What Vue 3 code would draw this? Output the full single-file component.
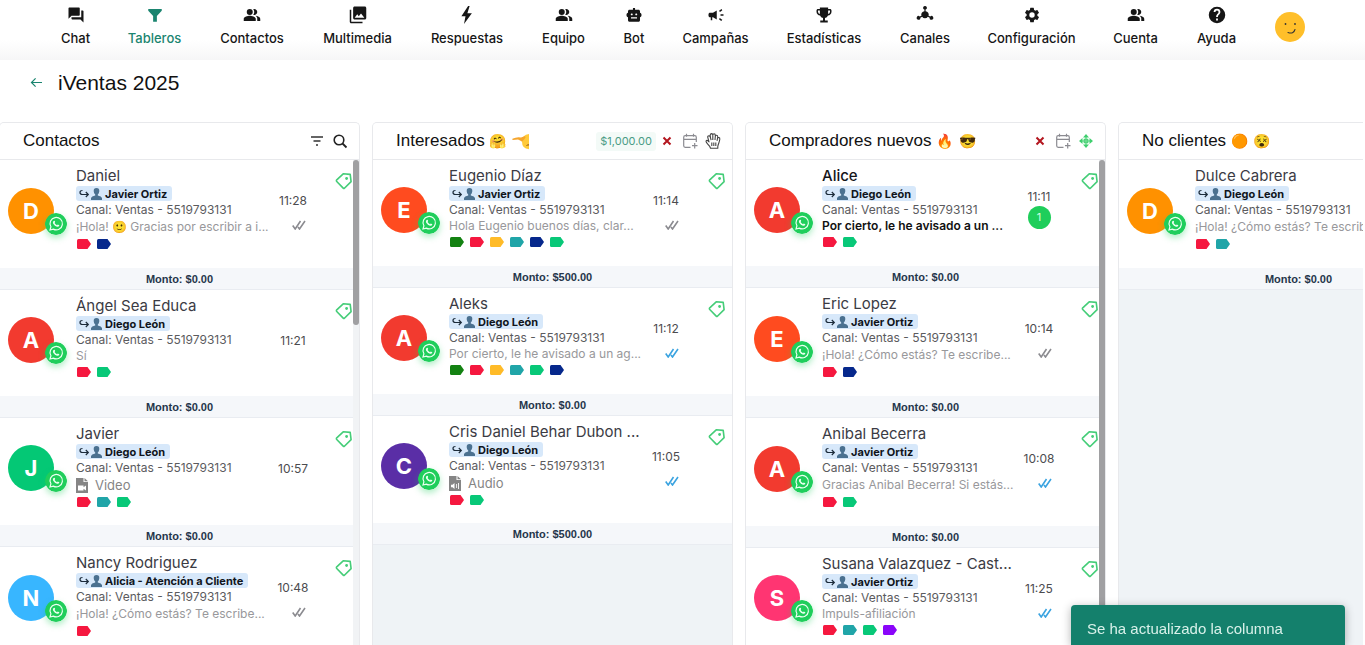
<script setup>
const nav = [
  { label: 'Chat', icon: 'chat' },
  { label: 'Tableros', icon: 'funnel', active: true },
  { label: 'Contactos', icon: 'people' },
  { label: 'Multimedia', icon: 'media' },
  { label: 'Respuestas', icon: 'bolt' },
  { label: 'Equipo', icon: 'people' },
  { label: 'Bot', icon: 'bot' },
  { label: 'Campañas', icon: 'horn' },
  { label: 'Estadísticas', icon: 'trophy' },
  { label: 'Canales', icon: 'hub' },
  { label: 'Configuración', icon: 'gear' },
  { label: 'Cuenta', icon: 'people' },
  { label: 'Ayuda', icon: 'help' },
]

const icons = {
  chat: 'M21 6h-2v9H6v2c0 .55.45 1 1 1h11l4 4V7c0-.55-.45-1-1-1zm-4 6V3c0-.55-.45-1-1-1H3c-.55 0-1 .45-1 1v14l4-4h10c.55 0 1-.45 1-1z',
  funnel: 'M3 4h18v2.200l-6.500 7v7.800h-5v-7.800L3 6.200z',
  people: 'M16.670 13.130C18.040 14.060 19 15.320 19 17v3h4v-3c0-2.180-3.570-3.470-6.330-3.870zM9 4a4 4 0 1 0 0 8 4 4 0 0 0 0-8zM15 12c2.210 0 4-1.790 4-4s-1.790-4-4-4c-.47 0-.91.1-1.330.24C14.500 5.270 15 6.580 15 8s-.5 2.730-1.330 3.760c.42.14.86.24 1.330.24zM9 13c-2.670 0-8 1.340-8 4v3h16v-3c0-2.660-5.330-4-8-4z',
  media: 'M23 16V2.500c0-1.100-.9-2-2-2H7.500c-1.100 0-2 .9-2 2V16c0 1.100.9 2 2 2H21c1.100 0 2-.9 2-2zM11 11l2.030 2.710L16 10l4.500 5.500h-13l3.500-4.500zM1 5v16c0 1.100.9 2 2 2h15v-2H3V5H1z',
  bolt: 'M13.500 0 4.500 13.500h5.500L8 24l10.500-14.200h-6L15.500 0z',
  bot: 'M20 9V7c0-1.100-.9-2-2-2h-4.600V2.500h-2.800V5H6c-1.100 0-2 .9-2 2v2c-1.200 0-2 1.340-2 3s.8 3 2 3v4c0 1.100.9 2 2 2h12c1.100 0 2-.9 2-2v-4c1.200 0 2-1.340 2-3s-.8-3-2-3zM7.700 11.200c0-.7.6-1.200 1.300-1.200s1.300.5 1.300 1.200-.6 1.200-1.300 1.200-1.300-.5-1.300-1.200zM16 16.500H8V15h8v1.500zm-1-4.100c-.7 0-1.300-.5-1.300-1.200S14.300 10 15 10s1.300.5 1.300 1.200-.6 1.200-1.300 1.200z',
  horn: 'M18 11v2h4v-2h-4zM16 17.610c.96.71 2.210 1.650 3.200 2.390.4-.53.8-1.070 1.200-1.600-.99-.74-2.240-1.680-3.200-2.400-.4.540-.8 1.080-1.200 1.610zM20.400 5.600c-.4-.53-.8-1.070-1.200-1.600-.99.740-2.240 1.680-3.200 2.400.4.530.8 1.070 1.200 1.600.96-.72 2.210-1.650 3.200-2.400zM4 9c-1.100 0-2 .9-2 2v2c0 1.100.9 2 2 2h1v4h2v-4h1l5 3V6L8 9H4z',
  trophy: 'M20 4h-2.500V2h-11v2H4c-1.100 0-2 .9-2 2v1.500c0 2.600 2 4.800 4.700 5.100A5.500 5.500 0 0 0 10.700 16v3.300H7V22h10v-2.700h-3.700V16a5.500 5.500 0 0 0 4-3.400C20 12.300 22 10.100 22 7.500V6c0-1.100-.9-2-2-2zM4 7.500V6h2.500v4.500A3.200 3.200 0 0 1 4 7.500zm16 0a3.200 3.200 0 0 1-2.500 3V6H20z',
  hub: 'M12 0a2.400 2.400 0 0 1 .8 4.700v2.200a4.600 4.600 0 0 1 3.900 6.100l2.300 1a2.400 2.400 0 1 1-.8 1.500l-2.400-1.100a4.600 4.600 0 0 1-7.600 0l-2.400 1.100A2.400 2.400 0 1 1 5 14l2.300-1a4.600 4.600 0 0 1 3.900-6.100V4.700A2.400 2.400 0 0 1 12 0z',
  gear: 'M19.140 12.940c.04-.3.060-.61.060-.94s-.020-.64-.070-.94l2.030-1.580a.49.49 0 0 0 .12-.61l-1.920-3.320a.49.49 0 0 0-.59-.22l-2.390.96a7 7 0 0 0-1.620-.94l-.36-2.540a.48.48 0 0 0-.48-.41h-3.840a.48.48 0 0 0-.47.41l-.36 2.540a7.400 7.400 0 0 0-1.620.94l-2.390-.96a.48.48 0 0 0-.59.22L2.740 8.870a.48.48 0 0 0 .12.61l2.030 1.580a6 6 0 0 0 0 1.880l-2.030 1.580a.49.49 0 0 0-.12.610l1.920 3.320c.12.220.37.290.59.220l2.390-.96c.5.380 1.030.7 1.620.94l.36 2.540c.05.240.24.410.48.410h3.840c.24 0 .44-.17.470-.41l.36-2.540a7.400 7.400 0 0 0 1.620-.94l2.390.96c.22.080.47 0 .59-.22l1.920-3.320a.48.48 0 0 0-.12-.61l-2.010-1.580zM12 15.600a3.600 3.600 0 1 1 0-7.200 3.600 3.600 0 0 1 0 7.200z',
  help: 'M12 1a11 11 0 1 0 0 22 11 11 0 0 0 0-22zm1.200 18.200h-2.400v-2.400h2.400v2.400zm2.300-8.700-1 1c-.9.900-1.300 1.600-1.300 3.300h-2.400v-.6c0-1.300.5-2.400 1.300-3.300l1.400-1.400c.4-.4.600-.9.600-1.500a2.100 2.100 0 0 0-4.200 0H7.500a4.500 4.500 0 0 1 9 0c0 1-.4 1.800-1 2.500z',
}

const R = '#f5183f'
const G = '#08c878'
const T = '#20a5a8'
const B = '#06288c'
const Y = '#ffbb28'
const D = '#138212'
const P = '#8a05fa'

const columns = [
  {
    title: 'Contactos', emoji: [], tools: 'search', scroll: 'short',
    cards: [
      { name: 'Daniel', color: '#ff9100', agent: 'Javier Ortiz', text: '¡Hola! 🙂 Gracias por escribir a i...', tall: true, time: '11:28', check: 'grey', tags: [R, B], amount: '$0.00' },
      { name: 'Ángel Sea Educa', color: '#f23a2f', agent: 'Diego León', text: 'Sí', time: '11:21', tags: [R, G], amount: '$0.00' },
      { name: 'Javier', color: '#04c875', agent: 'Diego León', file: 'Video', time: '10:57', tags: [R, T, G], amount: '$0.00' },
      { name: 'Nancy Rodriguez', color: '#38b6ff', agent: 'Alicia - Atención a Cliente', text: '¡Hola! ¿Cómo estás? Te escribe...', tall: true, time: '10:48', check: 'grey', tags: [R], amount: '' },
    ],
  },
  {
    title: 'Interesados', emoji: ['🤗', 'salute'], total: '$1,000.00', tools: 'grab',
    cards: [
      { name: 'Eugenio Díaz', color: '#ff4b1f', agent: 'Javier Ortiz', text: 'Hola Eugenio buenos días, clar...', time: '11:14', check: 'grey', tags: [D, R, Y, T, B, G], amount: '$500.00' },
      { name: 'Aleks', color: '#f23a2f', agent: 'Diego León', text: 'Por cierto, le he avisado a un ag...', time: '11:12', check: 'blue', tags: [D, R, Y, T, G, B], amount: '$0.00' },
      { name: 'Cris Daniel Behar Dubon ...', color: '#5a2ea6', agent: 'Diego León', file: 'Audio', time: '11:05', check: 'blue', tags: [R, G], amount: '$500.00' },
    ],
  },
  {
    title: 'Compradores nuevos', emoji: ['🔥', '😎'], tools: 'move', scroll: 'full',
    cards: [
      { name: 'Alice', unread: 1, color: '#f23a2f', agent: 'Diego León', text: 'Por cierto, le he avisado a un ...', time: '11:11', tags: [R, G], amount: '$0.00' },
      { name: 'Eric Lopez', color: '#ff4b1f', agent: 'Javier Ortiz', text: '¡Hola! ¿Cómo estás? Te escribe...', tall: true, time: '10:14', check: 'grey', tags: [R, B], amount: '$0.00' },
      { name: 'Anibal Becerra', color: '#f23a2f', agent: 'Javier Ortiz', text: 'Gracias Anibal Becerra! Si estás...', tall: true, time: '10:08', check: 'blue', tags: [R, G], amount: '$0.00' },
      { name: 'Susana Valazquez - Cast...', color: '#ff3572', agent: 'Javier Ortiz', text: 'Impuls-afiliación', time: '11:25', check: 'blue', tags: [R, T, G, P], amount: '' },
    ],
  },
  {
    title: 'No clientes', emoji: ['🟠', '😵'],
    cards: [
      { name: 'Dulce Cabrera', color: '#ff9100', agent: 'Diego León', text: '¡Hola! ¿Cómo estás? Te escribe...', tall: true, tags: [R, T], amount: '$0.00' },
    ],
  },
]
</script>

<template>
  <div class="page">
    <header class="topbar">
      <nav class="nav">
        <a v-for="n in nav" :key="n.label" href="#" class="nav-item" :class="{ active: n.active }">
          <svg class="nav-icon" viewBox="0 0 24 24"><path :d="icons[n.icon]" /></svg>
          <span>{{ n.label }}</span>
        </a>
        <button class="me" aria-label="Perfil">
          <svg viewBox="0 0 30 30">
            <circle cx="15" cy="15" r="15" fill="#ffbf2a" />
            <circle cx="10.500" cy="12" r=".9" fill="#333" />
            <circle cx="20" cy="12" r=".9" fill="#333" />
            <path d="M13 20.500q5.500 2 7-3" fill="none" stroke="#333" stroke-width="1.100" stroke-linecap="round" />
          </svg>
        </button>
      </nav>
    </header>

    <main class="main">
      <div class="heading">
        <button class="back" aria-label="Volver">
          <svg viewBox="0 0 14 12"><path d="M13 6H1.500M6 1.500 1.500 6 6 10.500" /></svg>
        </button>
        <h1>iVentas 2025</h1>
      </div>

      <div class="board">
        <section v-for="c in columns" :key="c.title" class="column">
          <header class="col-head">
            <h2>
              {{ c.title }}
              <template v-for="e in c.emoji" :key="e">
                <svg v-if="e === 'salute'" class="emoji-svg" viewBox="0 0 17 17">
                  <path d="M17 1v15.200q-7-.3-7-7.400Q10 1.500 17 1z" fill="#ffca3a" />
                  <path d="M.4 5.800q4.600-2.300 8.600-1.300l3.500-1.200q2 .4.200 2.500l-2.300 2.400q-1 .6-2.300-.6L6 6.500.8 7q-.8-.5-.4-1.200z" fill="#f5a52c" />
                  <path d="M14.500 12.500q1.300-.8 2.500-.6" fill="none" stroke="#8a5213" />
                </svg>
                <span v-else class="emoji">{{ e }}</span>
              </template>
            </h2>
            <div v-if="c.tools === 'search'" class="tools">
              <button aria-label="Filtrar"><svg class="ic" viewBox="0 0 16 16"><path d="M2 4h12M4.500 8h7M7 12h2" stroke="#333" stroke-width="1.600" /></svg></button>
              <button aria-label="Buscar"><svg class="ic" viewBox="0 0 16 16"><circle cx="7" cy="7" r="4.800" stroke="#222" stroke-width="1.600" /><path d="m10.500 10.500 4 4" stroke="#222" stroke-width="1.800" /></svg></button>
            </div>
            <div v-else-if="c.tools" class="tools">
              <span v-if="c.total" class="total">{{ c.total }}</span>
              <button aria-label="Eliminar"><svg class="ic" viewBox="0 0 16 16"><path d="m4.500 4.500 7 7M11.500 4.500l-7 7" stroke="#b3161f" stroke-width="2" /></svg></button>
              <button aria-label="Programar"><svg class="ic" viewBox="0 0 16 16"><path d="M8.500 14.300H3.200q-1.500 0-1.500-1.500V4.200q0-1.500 1.500-1.500h9.600q1.500 0 1.500 1.500V9M1.700 6.300h12.600M4.500.8v3M11.500.8v3M12.700 10v5.500M10 12.700h5.500" stroke="#8b8b91" stroke-width="1.200" /></svg></button>
              <button aria-label="Mover">
                <svg v-if="c.tools === 'grab'" class="ic hand" viewBox="0 0 16 18"><path d="M4.800 14.500C3.500 12.500 1 10.800 1 9.300q.2-1.300 1.600-.7L4 9.800 2.700 5.200q-.1-1.500 1.200-1.500 1 .1 1.400 1.300L5.200 3q.2-1.400 1.400-1.400 1.100.1 1.200 1.400.2-1.300 1.300-1.300 1.200.1 1.200 1.500v1q.4-1.100 1.400-.9 1.200.2 1 1.600l-.1 1.300q.5-.9 1.400-.6 1 .4.800 1.700c-.3 3-1.600 4.500-2 7.200v1.700H5.500zM5.300 5l.8 3.200M7.800 3.200V8M10.300 4.200 10 8M12.600 6.200 12 8.800M6.800 10.500v3.500M8.800 10.500v3.500M10.800 10.500v3.500" fill="#fff" stroke="#444" stroke-width="1.100" stroke-linejoin="round" /></svg>
                <svg v-else class="ic" viewBox="0 0 16 16"><path d="M8 2.500v11M2.500 8h11M6.200 6.200h3.600v3.600H6.200z" stroke="#3fcf6e" stroke-width="1.100" /><path d="m8 1 3 3.500H5zM8 15l3-3.500H5zM1 8l3.500-3v6zM15 8l-3.500-3v6z" fill="#3fcf6e" /></svg>
              </button>
            </div>
          </header>

          <div class="cards">
            <article v-for="k in c.cards" :key="k.name" class="card" :class="{ unread: k.unread, tall: k.tall, media: k.file }">
              <div class="body">
                <div class="avatar" :style="{ background: k.color }">
                  {{ k.name[0] === 'Á' ? 'A' : k.name[0] }}
                  <svg class="wa" viewBox="0 0 22 22">
                    <circle cx="11" cy="11" r="11" fill="#1fce5b" />
                    <path d="m5 17 .9-3.200a6.200 6.200 0 1 1 2.400 2.300z" fill="none" stroke="#eafff0" stroke-width="1.200" />
                    <path d="M8.600 8.100q.8-.9 1.200 0l.4 1-.6.900q.8 1.500 2.400 2.200l.8-.8 1.500.8q.3 1.300-1.500 1.500c-2.300 0-4.800-2.600-4.900-4.300q0-.7.700-1.300z" fill="#eafff0" />
                  </svg>
                </div>
                <div class="info">
                  <h3 class="name">{{ k.name }}</h3>
                  <div class="agent-row">
                    <span class="agent">
                      <svg class="agent-ic" viewBox="0 0 23 12">
                        <path d="M3.500 2.500Q1 2.500 1 4.500t2.500 2H9M6.800 4 9.300 6.500 6.800 9" fill="none" stroke="#1c2b3a" stroke-width="1.200" />
                        <path d="M17.500 0q3 0 2.800 3.200-.2 2.300-1.500 3.300v1q3.700.8 4.200 2.500v2H12v-2q.5-1.700 4.200-2.500v-1q-1.300-1-1.500-3.300Q14.500 0 17.500 0z" fill="#4b7190" />
                      </svg>
                      {{ k.agent }}
                    </span>
                  </div>
                  <p class="channel">Canal: Ventas - 5519793131</p>
                  <p v-if="k.file" class="file">
                    <svg viewBox="0 0 12 15"><path d="M0 0h7.500v4H12v11H0zM8.500 0 12 3.200H8.500z" fill="#858585" /><path v-if="k.file === 'Video'" d="M2 7.500h5.500v1.700L10 7.500v5l-2.500-1.700v1.700H2z" fill="#fff" /><path v-else d="M2 8.800h1.500l2-1.800v6l-2-1.800H2zM7 8v4h.8V8zM9 7v6h.9V7z" fill="#fff" /></svg>
                    {{ k.file }}
                  </p>
                  <p v-else class="msg">{{ k.text }}</p>
                  <div class="tags">
                    <svg v-for="(t, i) in k.tags" :key="i" viewBox="0 0 14 10"><path d="M1.500 0H10.500L14 5 10.500 10H1.500Q0 10 0 8.500V1.500Q0 0 1.500 0z" :fill="t" /></svg>
                  </div>
                </div>
                <template v-if="k.time">
                  <div class="meta">
                    <time>{{ k.time }}</time>
                    <span v-if="k.unread" class="count">{{ k.unread }}</span>
                    <svg v-if="k.check" class="check" :class="k.check" viewBox="0 0 14 10"><path d="m.7 5.500 2.500 3.500L8.500 1M6 7l1.500 2 5.500-8" /></svg>
                  </div>
                  <button class="label" aria-label="Etiquetar">
                    <svg viewBox="0 0 18 18"><path d="M1.500 8.200 8.200 1.800l7 .6.9 7.200-6.700 6.700q-.6.300-1.200-.2L1.500 9.200q-.3-.5 0-1z" fill="none" stroke="#45cd78" stroke-width="1.600" stroke-linejoin="round" /><circle cx="11.600" cy="6.500" r="1.400" fill="#45cd78" /></svg>
                  </button>
                </template>
              </div>
              <footer v-if="k.amount" class="amount">Monto: {{ k.amount }}</footer>
            </article>
          </div>
          <div v-if="c.scroll" class="track"><div class="thumb" :class="c.scroll" /></div>
        </section>
      </div>
    </main>

    <div class="toast" role="status">Se ha actualizado la columna</div>
  </div>
</template>

<style>
html,
body,
#app {
  height: 100%;
}
body {
  overflow: hidden;
}
</style>

<style scoped>
.page {
  height: 100%;
  display: flex;
  flex-direction: column;
  background: #fff;
  color: #111;
  font-family: Inter, "Noto Color Emoji", sans-serif;
  overflow: hidden;
}
h1, h2, h3, p { margin: 0; font-weight: 400; }
button { border: 0; padding: 0; background: none; display: flex; }
svg { display: block; fill: none; }
.topbar { flex: none; background: linear-gradient(#fff 40px, #f6f6f7); }
.nav {
  display: grid;
  grid-template-columns: 67fr 91fr 104fr 107fr 112fr 81fr 60fr 103fr 114fr 88fr 125fr 83fr 79fr 68fr;
  padding: 0 41px 0 42px;
  height: 60px;
}
.nav-item {
  display: flex;
  flex-direction: column;
  align-items: center;
  padding-top: 6px;
  gap: 5px;
  color: #161616;
  text-decoration: none;
  font-size: 13px;
  line-height: 18px;
  font-weight: 500;
}
.nav-icon { width: 18px; height: 18px; fill: currentColor; }
.active { color: #1b8570; }
.me { align-self: start; justify-self: center; margin-top: 12px; }
.me svg { width: 30px; height: 30px; }
.main { flex: 1; min-height: 0; display: flex; flex-direction: column; }
.heading { display: flex; align-items: center; gap: 15px; height: 45px; padding: 0 30px; }
.back svg { width: 13px; height: 11px; stroke: #1b8570; stroke-width: 1.300; }
h1 { font: 21px/26px "Liberation Sans", Arial, sans-serif; }
.board { flex: 1; min-height: 0; display: flex; gap: 12px; margin: 17px 2px 0 -1px; overflow: hidden; }
.column {
  position: relative;
  flex: none;
  width: 361px;
  box-sizing: border-box;
  display: flex;
  flex-direction: column;
  border: 1px solid #e8e9ec;
  border-bottom: 0;
  border-radius: 5px 5px 0 0;
  background: #eff3f6;
  overflow: hidden;
}
.col-head {
  flex: none;
  height: 36px;
  display: flex;
  align-items: center;
  justify-content: space-between;
  padding: 0 11px 0 23px;
  background: #fff;
  border-bottom: 1px solid #e8e9ec;
}
h2 {
  display: flex;
  align-items: center;
  gap: 5px;
  font: 17px/24px "Liberation Sans", Arial, sans-serif;
  white-space: nowrap;
}
.emoji { font-family: "Noto Color Emoji", sans-serif; font-size: 14px; }
.emoji-svg { width: 17px; height: 17px; }
.tools { display: flex; align-items: center; gap: 7px; }
.ic { width: 16px; height: 16px; }
.hand { height: 18px; }
.total {
  margin-right: -4px;
  padding: 0 4px;
  border-radius: 3px;
  background: #f3faf7;
  color: #4a9c86;
  font-size: 11px;
  line-height: 19px;
}
.cards { flex: 1; min-height: 0; overflow: hidden; }
.card { background: #fff; }
.body { display: flex; height: 106px; box-sizing: border-box; padding: 6px 6px 0 8px; }
.tall .body { height: 108px; }
.media .body { height: 107px; }
.avatar {
  position: relative;
  flex: none;
  width: 46px;
  height: 46px;
  margin-top: 21px;
  border-radius: 50%;
  color: #fff;
  text-align: center;
  font-size: 22px;
  line-height: 46px;
  font-weight: 700;
}
.tall .avatar { margin-top: 22px; }
.wa {
  position: absolute;
  left: 37px;
  top: 25px;
  width: 22px;
  height: 22px;
  border-radius: 50%;
  box-shadow: 0 3px 6px rgba(31, 206, 91, 0.35);
}
.info { width: 196px; margin-left: 22px; flex: none; }
.name { font-size: 15px; line-height: 20px; color: #3b3b44; white-space: nowrap; }
.agent-row { display: flex; height: 16px; }
.agent {
  display: flex;
  align-items: center;
  gap: 3px;
  height: 15px;
  padding: 0 5px 0 3px;
  border-radius: 3px;
  background: #d7e8fa;
  color: #10151c;
  font-size: 11px;
  font-weight: 700;
  white-space: nowrap;
}
.agent-ic { width: 23px; height: 12px; }
.channel { font-size: 12px; line-height: 16px; color: #5b5b5e; white-space: nowrap; }
.msg { font-size: 12px; line-height: 16px; color: #98989b; white-space: nowrap; }
.tall .msg { line-height: 18px; }
.file { display: flex; align-items: center; gap: 7px; font-size: 13px; line-height: 18px; color: #858585; }
.file svg { width: 12px; height: 15px; }
.tags { display: flex; gap: 6px; margin: 3px 0 0 1px; }
.tags svg { width: 14px; height: 10px; }
.meta {
  width: 42px;
  height: 90px;
  flex: none;
  display: flex;
  flex-direction: column;
  align-items: center;
  justify-content: center;
  gap: 11px;
}
time { font-size: 12px; line-height: 16px; color: #4c4c4f; }
.check { width: 14px; height: 10px; margin-left: 11px; stroke-width: 1.600; }
.grey { stroke: #8b8b90; }
.blue { stroke: #3aa3e0; }
.label { margin: 6px 0 0 auto; align-self: flex-start; }
.label svg { width: 18px; height: 18px; }
.unread .name { color: #15151a; font-weight: 500; }
.unread .msg { color: #111; font-weight: 600; }
.unread .meta { gap: 1px; height: 86px; }
.count {
  width: 23px;
  border-radius: 50%;
  background: #1fce5b;
  color: #d6ffe3;
  text-align: center;
  font-size: 11px;
  line-height: 23px;
}
.amount {
  height: 21px;
  border-bottom: 1px solid #e9ecf1;
  background: #f5f7fa;
  color: #25364b;
  text-align: center;
  font: bold 11px/22px "Liberation Sans", Arial, sans-serif;
}
.track { position: absolute; top: 37px; right: 0; bottom: 0; width: 6px; background: #f1f3f5; }
.thumb { width: 6px; border-radius: 3px; background: #a0a0a2; }
.short { height: 34%; }
.full { height: 100%; border-radius: 3px 3px 0 0; }
.toast {
  position: fixed;
  right: 20px;
  bottom: 0;
  width: 274px;
  height: 40px;
  box-sizing: border-box;
  padding: 14px 16px 0;
  border-radius: 4px 4px 0 0;
  background: #14806c;
  color: #d9f1ea;
  font: 15px/20px "Liberation Sans", Arial, sans-serif;
  box-shadow: 0 2px 10px rgba(0, 0, 0, 0.3);
}
</style>
